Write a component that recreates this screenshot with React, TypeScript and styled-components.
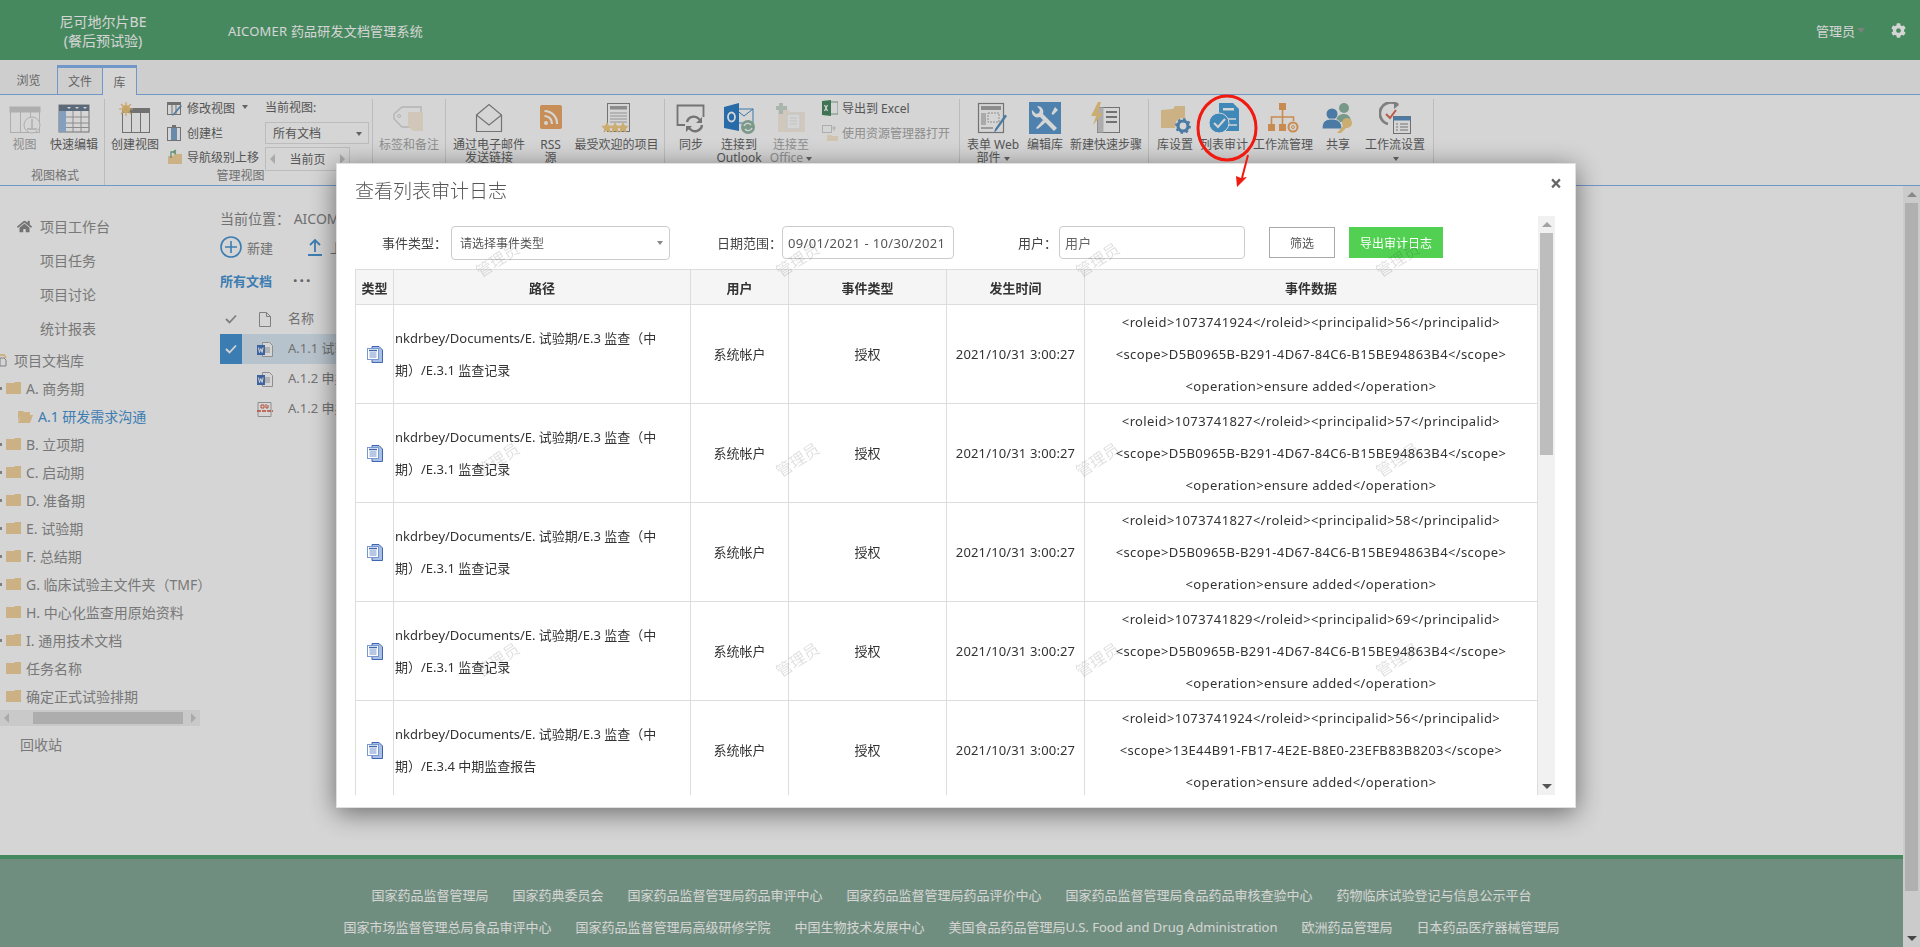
import React from "react";
import styled, { createGlobalStyle } from "styled-components";
import { FaCog, FaHome } from "react-icons/fa";

const FONT = `"Noto Sans", "Noto Sans CJK SC", sans-serif`;

const GlobalStyle = createGlobalStyle`
  html, body { margin: 0; padding: 0; height: 100%; overflow: hidden; background: #fff; }
  body { font-family: ${FONT}; font-size: 13px; color: #666; }
  * { box-sizing: border-box; }
`;

const Shell = styled.div`
  width: 1920px;
  height: 947px;
  display: flex;
  flex-direction: column;
  overflow: hidden;
`;

/* top bar */
const TopBar = styled.header`
  height: 60px;
  flex: none;
  display: flex;
  align-items: center;
  background: #55a572;
  color: #fff;
  font-size: 14px;
`;
const ProjectName = styled.div`
  width: 206px;
  text-align: center;
  line-height: 19px;
  padding-top: 2px;
`;
const SystemName = styled.div`
  margin-left: 22px;
  flex: 1;
  font-size: 13px;
  letter-spacing: 0.2px;
`;
const UserName = styled.div`
  display: flex;
  align-items: center;
  gap: 2px;
  margin-right: 26px;
  font-size: 13px;
  &::after {
    content: "";
    border: 4px solid transparent;
    border-top: 5px solid #8f9f94;
    margin-top: 5px;
  }
`;
const Gear = styled(FaCog)`
  width: 15px;
  height: 15px;
  margin-right: 14px;
  color: #fff;
`;

/* ribbon tabs */
const TabStrip = styled.div`
  height: 35px;
  flex: none;
  display: flex;
  align-items: flex-end;
  background: #f7f7f7;
  border-bottom: 1px solid #88b5f0;
  font-size: 12px;
`;
const Tab = styled.div<{ $w: number; $on?: boolean; $plain?: boolean }>`
  width: ${(p) => p.$w}px;
  height: ${(p) => (p.$on ? 30 : 29)}px;
  display: flex;
  align-items: center;
  justify-content: center;
  color: #777;
  margin-bottom: ${(p) => (p.$on ? -1 : 0)}px;
  background: ${(p) => (p.$on ? "#fff" : "transparent")};
  border: ${(p) => (p.$plain ? "none" : "1px solid #88b5f0")};
  border-top: ${(p) => (p.$plain ? "none" : "3px solid #88b5f0")};
  border-bottom: none;
  border-left-width: ${(p) => (p.$on ? 0 : 1)}px;
`;

const Ribbon = styled.div`
  height: 91px;
  flex: none;
  display: flex;
  background: #fff;
  border-bottom: 1px solid #88b5f0;
`;
const Group = styled.section<{ $w: number; $pl?: number }>`
  width: ${(p) => p.$w}px;
  flex: none;
  margin-top: 4px;
  padding-left: ${(p) => p.$pl ?? 0}px;
  border-right: 1px solid #e2e2e2;
  display: flex;
  flex-direction: column;
`;
const GroupItems = styled.div`
  flex: 1;
  display: flex;
  align-items: flex-start;
  min-height: 0;
`;
const GroupLabel = styled.div`
  height: 18px;
  line-height: 18px;
  font-size: 12px;
  text-align: center;
  color: #888;
`;
const BigItem = styled.div<{ $w: number; $off?: boolean }>`
  width: ${(p) => p.$w}px;
  flex: none;
  padding-top: 3px;
  display: flex;
  flex-direction: column;
  align-items: center;
  font-size: 12px;
  text-align: center;
  white-space: nowrap;
  color: ${(p) => (p.$off ? "#aaa" : "#666")};
  svg { display: block; margin-bottom: 4px; }
`;
const ItemText = styled.div`
  line-height: 13px;
`;
const Caret = styled.span`
  display: inline-block;
  margin-left: 3px;
  border: 3px solid transparent;
  border-top: 4px solid #777;
  vertical-align: -2px;
`;
const SmallColumn = styled.div<{ $w: number; $ml: number }>`
  width: ${(p) => p.$w}px;
  margin-left: ${(p) => p.$ml}px;
  margin-top: -3px;
  flex: none;
  display: flex;
  flex-direction: column;
  font-size: 12px;
`;
const SmallItem = styled.div<{ $off?: boolean }>`
  height: 24.5px;
  display: flex;
  align-items: center;
  gap: 4px;
  white-space: nowrap;
  color: ${(p) => (p.$off ? "#aaa" : "#666")};
`;
const CurrentViewColumn = styled.div`
  width: 104px;
  flex: none;
  font-size: 12px;
  color: #666;
`;
const ViewCaption = styled.div`
  height: 23px;
  line-height: 18px;
`;
const ViewSelect = styled.div`
  height: 22px;
  display: flex;
  align-items: center;
  justify-content: space-between;
  padding: 0 6px 0 7px;
  border: 1px solid #e1e1e1;
  &::after {
    content: "";
    border: 3px solid transparent;
    border-top: 4px solid #777;
    margin-top: 4px;
  }
`;
const PageBox = styled.div`
  width: 85px;
  height: 24px;
  margin-top: 3px;
  display: flex;
  align-items: center;
  justify-content: space-between;
  padding: 0 4px;
  border: 1px solid #e1e1e1;
`;
const Tri = styled.span<{ $dir: "left" | "right" }>`
  border: 5px solid transparent;
  ${(p) => (p.$dir === "left" ? "border-right: 5px solid #ccc; border-left: 0;" : "border-left: 5px solid #ccc; border-right: 0;")}
`;

/* body */
const BodyRow = styled.div`
  flex: 1;
  min-height: 0;
  display: flex;
`;
const ContentColumn = styled.div`
  flex: 1;
  min-width: 0;
  display: flex;
  flex-direction: column;
`;
const Main = styled.main`
  flex: 1;
  min-height: 0;
  display: flex;
  overflow: hidden;
  background: #fff;
`;
const PageScrollbar = styled.div`
  width: 17px;
  flex: none;
  display: flex;
  flex-direction: column;
  align-items: center;
  background: #f4f4f4;
  padding: 0 2px;
`;
const ScrollArrow = styled.div<{ $up?: boolean; $dark?: boolean }>`
  height: 17px;
  flex: none;
  display: flex;
  align-items: center;
  justify-content: center;
  &::after {
    content: "";
    border: 5px solid transparent;
    ${(p) => (p.$up ? "border-top: 0;" : "border-bottom: 0;")}
    border-${(p) => (p.$up ? "bottom" : "top")}: 5px solid ${(p) => (p.$dark ? "#555" : "#a3a3a3")};
  }
`;
const PageThumb = styled.div`
  width: 13px;
  height: 688px;
  flex: none;
  background: #d3d3d3;
`;
const PageScrollFill = styled.div`
  flex: 1;
`;

const Nav = styled.nav`
  width: 200px;
  flex: none;
  padding-top: 23px;
  color: #909090;
  font-size: 14px;
`;
const NavLink = styled.div`
  height: 34px;
  display: flex;
  align-items: center;
  padding-left: 40px;
  position: relative;
`;
const HomeIcon = styled(FaHome)`
  position: absolute;
  left: 17px;
  top: 10px;
  width: 15px;
  height: 15px;
  color: #8a8a8a;
`;
const TreeRoot = styled.div`
  height: 28px;
  margin-top: 1px;
  display: flex;
  align-items: center;
  gap: 4px;
`;
const TreeRow = styled.div<{ $depth?: number; $on?: boolean; $dot?: boolean }>`
  height: 28px;
  display: flex;
  align-items: center;
  gap: 5px;
  white-space: nowrap;
  position: relative;
  padding-left: ${(p) => (p.$depth ? 18 : 6)}px;
  color: ${(p) => (p.$on ? "#4a96d5" : "#909090")};
  svg { flex: none; }
  &::before {
    content: "";
    display: ${(p) => (p.$dot ? "block" : "none")};
    position: absolute;
    left: 0;
    top: 13px;
    width: 2px;
    height: 3px;
    background: #999;
  }
`;
const NavScroll = styled.div`
  height: 16px;
  display: flex;
  align-items: center;
  justify-content: space-between;
  background: #f1f1f1;
  padding: 0 4px;
`;
const NavThumb = styled.div`
  width: 150px;
  height: 12px;
  margin-left: 16px;
  background: #d0d0d0;
`;
const Recycle = styled.div`
  margin-top: 9px;
  padding-left: 20px;
  line-height: 20px;
`;

const ListPane = styled.div`
  width: 1000px;
  flex: none;
  padding: 22px 0 0 20px;
  color: #888;
  white-space: nowrap;
  font-size: 14px;
`;
const Crumb = styled.div`
  height: 22px;
  line-height: 22px;
`;
const ActionRow = styled.div`
  height: 38px;
  display: flex;
  align-items: center;
  font-size: 13px;
  padding-bottom: 4px;
`;
const NewAction = styled.span`
  display: flex;
  align-items: center;
  gap: 5px;
  width: 56px;
  svg { flex: none; }
`;
const UploadAction = styled.span`
  display: flex;
  align-items: center;
  gap: 8px;
  margin-left: 32px;
`;
const ViewTabs = styled.div`
  height: 26px;
  margin-top: -1px;
  display: flex;
  align-items: center;
  gap: 21px;
  font-size: 13px;
`;
const ViewTab = styled.span`
  font-weight: 700;
  color: #4a96d5;
`;
const Dots = styled.span`
  font-weight: 700;
  font-size: 16px;
  letter-spacing: 2px;
  color: #777;
  line-height: 10px;
`;
const ListHead = styled.div`
  height: 30px;
  margin-top: 11px;
  display: flex;
  align-items: center;
  font-size: 13px;
`;
const ListRow = styled.div<{ $on?: boolean }>`
  height: 30px;
  display: flex;
  align-items: center;
  font-size: 13px;
  background: ${(p) => (p.$on ? "#dceaf5" : "transparent")};
`;
const CheckCell = styled.div<{ $on?: boolean }>`
  width: 22px;
  height: 100%;
  flex: none;
  display: flex;
  align-items: center;
  justify-content: center;
  background: ${(p) => (p.$on ? "#4796d7" : "transparent")};
`;
const FileCell = styled.div`
  width: 46px;
  flex: none;
  display: flex;
  justify-content: center;
`;
const NameCell = styled.div`
  padding-bottom: 4px;
`;

/* footer */
const Footer = styled.footer`
  height: 92px;
  flex: none;
  padding-top: 19px;
  background: #87ab98;
  border-top: 4px solid #55a572;
  color: #fff;
  font-size: 13px;
`;
const FooterRow = styled.div`
  height: 32px;
  display: flex;
  justify-content: center;
  align-items: center;
  gap: 24px;
  white-space: nowrap;
`;

/* modal */
const Backdrop = styled.div`
  position: fixed;
  inset: 0;
  background: rgba(0, 0, 0, 0.165);
`;
const Modal = styled.div`
  position: fixed;
  left: 336px;
  top: 163px;
  width: 1240px;
  height: 645px;
  background: #fff;
  box-shadow: 0 5px 25px rgba(0, 0, 0, 0.5);
  border: 1px solid rgba(0, 0, 0, 0.12);
  display: flex;
  flex-direction: column;
  padding: 0 20px 12px 18px;
  overflow: hidden;
  color: #333;
`;
const ModalHead = styled.div`
  height: 52px;
  flex: none;
  display: flex;
  align-items: center;
  justify-content: space-between;
`;
const ModalTitle = styled.h4`
  margin: 0;
  font-size: 19px;
  font-weight: 300;
  color: #555;
`;
const Close = styled.span`
  font-size: 21px;
  font-weight: 700;
  color: #666;
  margin-right: -7px;
  margin-top: -13px;
  line-height: 1;
`;
const ModalBody = styled.div`
  flex: 1;
  min-height: 0;
  display: flex;
`;
const ModalContent = styled.div`
  width: 1183px;
  flex: none;
  overflow: hidden;
`;
const FilterRow = styled.div`
  height: 53px;
  display: flex;
  align-items: center;
  padding-left: 27px;
`;
const FilterLabel = styled.label<{ $w: number; $ml?: number }>`
  width: ${(p) => p.$w}px;
  margin-left: ${(p) => p.$ml ?? 0}px;
  font-size: 13px;
  flex: none;
  color: #444;
`;
const SelectBox = styled.div`
  width: 219px;
  height: 34px;
  flex: none;
  display: flex;
  align-items: center;
  justify-content: space-between;
  padding: 0 6px 0 8px;
  border: 1px solid #ccc;
  border-radius: 4px;
  font-size: 12px;
  color: #555;
  &::after {
    content: "";
    border: 3px solid transparent;
    border-top: 4px solid #888;
    margin-top: 4px;
  }
`;
const TextBox = styled.input<{ $w: number }>`
  width: ${(p) => p.$w}px;
  height: 33px;
  flex: none;
  padding: 0 0 0 5px;
  border: 1px solid #ccc;
  border-radius: 4px;
  font-family: ${FONT};
  font-size: 13px;
  letter-spacing: 0.35px;
  color: #555;
  outline: none;
  &::placeholder { color: #666; }
`;
const FilterButton = styled.button`
  width: 66px;
  height: 31px;
  margin-left: 24px;
  flex: none;
  background: #fff;
  border: 1px solid #aaa;
  font-family: ${FONT};
  font-size: 12px;
  color: #555;
`;
const ExportButton = styled.button`
  width: 94px;
  height: 31px;
  margin-left: 14px;
  flex: none;
  background: #52d052;
  border: none;
  font-family: ${FONT};
  font-size: 12px;
  color: #fff;
`;
const Table = styled.table`
  width: 1182px;
  table-layout: fixed;
  border-collapse: collapse;
  font-size: 13px;
  color: #333;
`;
const Th = styled.th<{ $w: number }>`
  width: ${(p) => p.$w}px;
  height: 35px;
  padding: 0;
  background: #f5f5f5;
  border: 1px solid #ddd;
  font-weight: 700;
  font-size: 13px;
  color: #333;
`;
const Td = styled.td<{ $left?: boolean }>`
  height: 99px;
  padding: 0 0 0 ${(p) => (p.$left ? 1 : 0)}px;
  border: 1px solid #ddd;
  text-align: ${(p) => (p.$left ? "left" : "center")};
  line-height: 32.3px;
  white-space: nowrap;
  svg { display: block; margin: 0 auto; }
`;
const CellLine = styled.div`
  height: 32.3px;
`;
const DataLine = styled(CellLine)`
  letter-spacing: 0.38px;
`;
const TimeText = styled.span`
  letter-spacing: 0.15px;
`;
const ModalScrollbar = styled.div`
  width: 17px;
  flex: none;
  display: flex;
  flex-direction: column;
  align-items: center;
  background: #f1f1f1;
`;
const ModalThumb = styled.div`
  width: 13px;
  height: 222px;
  flex: none;
  background: #bdbdbd;
`;
const Watermarks = styled.div`
  position: absolute;
  left: 10px;
  top: -5px;
  display: grid;
  grid-template-columns: repeat(4, 300px);
  grid-auto-rows: 200px;
  pointer-events: none;
`;
const Watermark = styled.span`
  display: flex;
  align-items: center;
  justify-content: center;
  transform: rotate(-33deg);
  font-size: 16px;
  color: rgba(0, 0, 0, 0.12);
`;
const Annotation = styled.svg`
  position: fixed;
  left: 1190px;
  top: 90px;
`;

/* icons drawn for the ribbon */
const Ico: React.FC<{ s?: number; children: React.ReactNode }> = ({ s = 32, children }) => (
  <svg width={s} height={s} viewBox={`0 0 ${s} ${s}`} fill="none">
    {children}
  </svg>
);

const TableGrid = ({ op = 1 }: { op?: number }) => (
  <g opacity={op} stroke="#8f8f8f">
    <rect x="1.5" y="5.5" width="29" height="25" fill="#fff" />
    <rect x="1" y="5" width="30" height="5" fill="#8f8f8f" />
    <path d="M11.5 10v20M21.5 10v20" />
  </g>
);
const ViewIco = () => (
  <Ico>
    <g opacity="0.4">
      <TableGrid />
      <circle cx="23" cy="23" r="8" fill="#fff" stroke="#8f8f8f" />
      <path d="M23 17v10M18 27h10" stroke="#8f8f8f" strokeWidth="1.5" />
    </g>
  </Ico>
);
const QuickEditIco = () => (
  <Ico>
    <rect x="1" y="3" width="30" height="27" fill="#fff" stroke="#8b8b8b" />
    <rect x="1" y="3" width="30" height="6" fill="#6d7f92" />
    <rect x="1" y="9" width="7" height="21" fill="#9dbfe4" />
    <path d="M8 15h23M8 21h23M8 25.500h23M15 9v21M23 9v21" stroke="#a8a8a8" />
    <path d="M9 5h4l-2 2zM17 5h4l-2 2zM25 5h4l-2 2z" fill="#fff" />
  </Ico>
);
const CreateViewIco = () => (
  <Ico>
    <rect x="3.500" y="6.500" width="27" height="24" fill="#fff" stroke="#888" />
    <rect x="3" y="6" width="28" height="5" fill="#888" />
    <path d="M12.500 11v19M21.500 11v19" stroke="#888" />
    <circle cx="7" cy="7" r="4" fill="#f3cf89" />
    <path d="M7 0v14M0 7h14M2 2l10 10M12 2L2 12" stroke="#eec477" strokeWidth="1.200" />
  </Ico>
);
const TagIco = () => (
  <Ico>
    <g opacity="0.45">
      <path d="M1 12l8-7h19v20H9l-8-8z" fill="#fff" stroke="#aaa" strokeWidth="1.300" />
      <circle cx="6" cy="14" r="1.500" stroke="#aaa" />
      <path d="M15 10h15v19H20l-5-5z" fill="#f3dcb6" />
    </g>
  </Ico>
);
const MailIco = () => (
  <Ico>
    <path d="M3.500 13L16 2.500 28.500 13v16.500h-25z" fill="#fff" stroke="#8a8a8a" strokeWidth="1.200" />
    <path d="M3.500 13L16 23l12.500-10" stroke="#8a8a8a" strokeWidth="1.200" />
  </Ico>
);
const RssIco = () => (
  <Ico>
    <rect x="5" y="3" width="22" height="24" rx="2" fill="#f0ab6a" />
    <circle cx="11" cy="21" r="2" fill="#fff" />
    <path d="M9.500 14a7.500 7.500 0 0 1 7.500 8M9.500 9a12.500 12.500 0 0 1 12.500 13" stroke="#fff" strokeWidth="2.200" />
  </Ico>
);
const StarPageIco = () => (
  <Ico>
    <rect x="6.500" y="1.500" width="22" height="28" fill="#fff" stroke="#8a8a8a" />
    <rect x="9" y="4" width="17" height="3.500" fill="#a8a8a8" />
    <path d="M9 11h17M9 14h17M9 17h17M9 20h17" stroke="#b0b0b0" />
    <g fill="#f3cf89">
      <path d="M6 20l1.800 3.600 3.900.5-2.800 2.700.7 3.900L6 28.800l-3.600 1.900.7-3.900L.3 24.100l3.900-.5z" />
      <path d="M14 20l1.800 3.600 3.900.5-2.800 2.700.7 3.900-3.600-1.900-3.600 1.900.7-3.900-2.800-2.700 3.900-.5z" />
      <path d="M22 20l1.800 3.600 3.900.5-2.800 2.700.7 3.900-3.600-1.900-3.600 1.900.7-3.900-2.800-2.700 3.900-.5z" />
    </g>
  </Ico>
);
const SyncIco = () => (
  <Ico>
    <path d="M10 23H2.500V3.500h26V15" stroke="#8a8a8a" strokeWidth="1.800" />
    <path d="M12 20a7 7 0 0 1 12-3l2 2M27 23a7 7 0 0 1-12 4l-2-2" stroke="#8a8a8a" strokeWidth="2.400" />
    <path d="M27 15v6h-6zM11 30v-6h6z" fill="#8a8a8a" />
  </Ico>
);
const OutlookIco = () => (
  <Ico>
    <rect x="12" y="7" width="18" height="14" fill="#fff" stroke="#4a8fcc" />
    <path d="M12 7l9 7 9-7" stroke="#4a8fcc" />
    <path d="M1 5l15-4v28L1 26z" fill="#2f80c9" />
    <ellipse cx="8.500" cy="15" rx="3.500" ry="4.500" stroke="#fff" strokeWidth="1.800" />
    <circle cx="25" cy="25" r="7" fill="#94b8a5" />
    <path d="M21 24a4 4 0 0 1 7-1M29 26a4 4 0 0 1-7 1" stroke="#fff" strokeWidth="1.300" />
  </Ico>
);
const OfficeIco = () => (
  <Ico>
    <g opacity="0.4">
      <path d="M3 7h9l3 3h15v20H3z" fill="#f3dcb6" />
      <rect x="12" y="12" width="13" height="15" fill="#fff" stroke="#ccc" />
      <path d="M15 16h7M15 19h7M15 22h7" stroke="#ccc" />
      <path d="M4 0v11M-1 5h11" transform="translate(2 1)" stroke="#7fa58f" strokeWidth="4" />
    </g>
  </Ico>
);
const FormIco = () => (
  <Ico>
    <rect x="1.500" y="1.500" width="25" height="29" fill="#fff" stroke="#8a8a8a" strokeWidth="1.200" />
    <rect x="4" y="4" width="20" height="4" fill="#a8a8a8" />
    <rect x="4" y="11" width="5" height="12" fill="#ccc" />
    <rect x="11" y="11" width="11" height="9" stroke="#aaa" strokeDasharray="2 1" />
    <path d="M4 26h12" stroke="#bbb" strokeWidth="2" />
    <path d="M30 14L20 28l-3 3 1-4 10-14.500z" fill="#5a93c5" />
  </Ico>
);
const LibEditIco = () => (
  <Ico>
    <rect width="32" height="32" fill="#5f9bd1" />
    <path d="M8 4a6 6 0 0 1 6 8l14 14-3 3-14-14a6 6 0 0 1-8-7l4 4 3-1 1-3z" fill="#fff" />
    <path d="M26 5l3 3-5 5-1.500-1.500zM14 18l-7 8 1 1 2-1 7-6z" fill="#fff" />
  </Ico>
);
const QuickStepIco = () => (
  <Ico>
    <rect x="7.500" y="5.500" width="22" height="25" fill="#fff" stroke="#8a8a8a" />
    <rect x="7.500" y="5.500" width="6" height="25" fill="#d0d0d0" />
    <path d="M16 10h11M16 15h11M16 20h11" stroke="#888" strokeWidth="2" />
    <path d="M8 0l-7 14h5L3 23l10-12H8l3-11z" fill="#f3cf89" />
  </Ico>
);
const LibSetIco = () => (
  <Ico>
    <path d="M2 8l12-1 2-3 10 0v22H2z" fill="#f5d49e" />
    <circle cx="24" cy="24" r="8" fill="#fff" />
    <circle cx="24" cy="24" r="5" stroke="#5a93c5" strokeWidth="3.200" />
    <circle cx="24" cy="24" r="7" stroke="#5a93c5" strokeWidth="1.800" strokeDasharray="2.500 3" />
  </Ico>
);
const AuditIco = () => (
  <Ico>
    <path d="M11 1h14l6 6v22H18V22H11z" fill="#4ca3dc" />
    <rect x="15" y="6" width="11" height="2.500" fill="#fff" />
    <path d="M20 17h8M20 23h9" stroke="#fff" strokeWidth="1.600" />
    <circle cx="11" cy="21" r="10" fill="#4ca3dc" stroke="#fff" />
    <path d="M6 21l4 4 7-8" stroke="#fff" strokeWidth="2" />
  </Ico>
);
const FlowIco = () => (
  <Ico>
    <rect x="12" y="1" width="7" height="7" fill="#f0a860" />
    <rect x="1" y="22" width="7" height="7" fill="#f0a860" />
    <rect x="12" y="22" width="7" height="7" fill="#f0a860" />
    <path d="M15.500 8v14M4.500 22v-7h22v4" stroke="#f0a860" strokeWidth="1.600" />
    <circle cx="26" cy="25" r="4.500" stroke="#f0a860" strokeWidth="2" />
    <circle cx="26" cy="25" r="1.500" stroke="#f0a860" />
  </Ico>
);
const ShareIco = () => (
  <Ico>
    <circle cx="22" cy="6" r="5" fill="#90b8a5" />
    <path d="M14 20c0-6 4-8 8-8s7 3 7 8z" fill="#90b8a5" />
    <circle cx="10" cy="12" r="5.500" fill="#5a93c5" />
    <path d="M0 27c0-8 4-10 10-10s10 3 10 10z" fill="#5a93c5" stroke="#fff" />
    <circle cx="25" cy="21" r="5" fill="#f3cf89" />
    <path d="M22 23l-7 8h4l6-6z" fill="#f3cf89" />
  </Ico>
);
const FlowSetIco = () => (
  <Ico>
    <path d="M19 3A11 11 0 1 0 9 22" stroke="#999" strokeWidth="2.800" />
    <path d="M15 0l5 3-5 4z" fill="#999" />
    <path d="M7 12l4 4 6-8" stroke="#e06b55" strokeWidth="2" />
    <rect x="14.500" y="14.500" width="17" height="17" fill="#fff" stroke="#888" />
    <rect x="14.500" y="14.500" width="17" height="4" fill="#5a93c5" />
    <path d="M17 22h2M21 22h8M17 25h2M21 25h8M17 28h2M21 28h8" stroke="#888" />
  </Ico>
);

const SmallModify = () => (
  <Ico s={16}>
    <rect x="0.500" y="2.500" width="13" height="12" fill="#fff" stroke="#888" />
    <rect y="2" width="14" height="3" fill="#888" />
    <path d="M5 5v9M9 5v9" stroke="#888" />
    <path d="M15 6L7 15l-2 1 1-2 7.500-9z" fill="#5a93c5" />
  </Ico>
);
const SmallColumnIco = () => (
  <Ico s={16}>
    <rect x="0.500" y="2.500" width="13" height="13" fill="#fff" stroke="#888" />
    <rect x="4" y="3" width="6" height="12" fill="#7ea6cc" />
    <rect x="5" y="0" width="4" height="3" fill="#888" />
  </Ico>
);
const SmallUp = () => (
  <Ico s={16}>
    <path d="M1 7h5l1-2h8v10H1z" fill="#f5d49e" />
    <path d="M4 9V3h5M9 1l-3 2 3 2" stroke="#7fae8f" strokeWidth="1.400" />
  </Ico>
);
const SmallExcel = () => (
  <Ico s={16}>
    <rect x="7" y="2" width="9" height="12" fill="#fff" stroke="#7fae8f" />
    <path d="M0 1l9-1v16l-9-1z" fill="#4b8a64" />
    <path d="M2.500 5l3 6M5.500 5l-3 6" stroke="#fff" strokeWidth="1.200" />
  </Ico>
);
const SmallExplorer = () => (
  <Ico s={16}>
    <g opacity="0.45">
      <rect x="0.500" y="0.500" width="9" height="7" stroke="#999" />
      <path d="M12 1v5M10 3h4" stroke="#999" />
      <path d="M5 10h4l1 1h6v5H5z" fill="#f5d49e" />
    </g>
  </Ico>
);
const Folder = ({ open }: { open?: boolean }) => (
  <svg width="15" height="14" viewBox="0 0 15 14">
    {open ? (
      <path d="M0 2h5l1 1h6v3H3L0 12zM3 6h12l-3 8H0z" fill="#f5d49e" />
    ) : (
      <path d="M0 2h8l1-1h6v12H0z" fill="#f5d49e" />
    )}
  </svg>
);
const LibIcon = () => (
  <svg width="10" height="14" viewBox="0 0 10 14" fill="none">
    <path d="M0 5h4l2 2v6H0z" stroke="#999" />
    <path d="M-4 2h8l2 3" stroke="#f5d49e" strokeWidth="2" />
  </svg>
);
const WordFile = () => (
  <svg width="16" height="15" viewBox="0 0 16 15">
    <path d="M5.500.5h7l3 3v11h-10z" fill="#fff" stroke="#aaa" />
    <path d="M8 6h5M8 8h5M8 10h5" stroke="#aaa" />
    <rect y="3" width="8" height="10" fill="#4a78bf" />
    <path d="M1.500 5.500l1 5 1.300-4 1.300 4 1-5" stroke="#fff" fill="none" />
  </svg>
);
const PdfFile = () => (
  <svg width="16" height="15" viewBox="0 0 16 15" fill="none">
    <path d="M1 .5h13v14H1z" stroke="#aaa" />
    <path d="M0 9h16" stroke="#d85a45" strokeWidth="1.500" strokeDasharray="4 1" />
    <path d="M4 3h3v3H4zM9 2v4h2V3" stroke="#d85a45" />
  </svg>
);
const DocIcon = () => (
  <svg width="16" height="17" viewBox="0 0 16 17" fill="none">
    <path d="M5 .5h7l3.500 3.500v12.500H5z" fill="#a9bfe8" stroke="#3f66b0" />
    <rect x="0.500" y="2.500" width="11" height="11" fill="#fff" stroke="#7898d0" />
    <path d="M2 4.500h8" stroke="#3f66b0" strokeWidth="1.500" />
    <path d="M2.500 7h7M2.500 9h7M2.500 11h7" stroke="#6f8fcc" />
  </svg>
);
const Tick = ({ color }: { color: string }) => (
  <svg width="12" height="10" viewBox="0 0 12 10" fill="none">
    <path d="M1 5l3.500 3.500L11 1.500" stroke={color} strokeWidth="1.800" />
  </svg>
);
const PlusCircle = () => (
  <svg width="22" height="22" viewBox="0 0 22 22" fill="none" stroke="#4a96d5" strokeWidth="1.600">
    <circle cx="11" cy="11" r="10" />
    <path d="M11 5v12M5 11h12" />
  </svg>
);
const UploadArrow = () => (
  <svg width="14" height="18" viewBox="0 0 14 18" fill="none" stroke="#4a96d5" strokeWidth="1.800">
    <path d="M7 14V2M2 7l5-5 5 5M0 17h14" />
  </svg>
);
const BlankPage = () => (
  <svg width="12" height="15" viewBox="0 0 12 15" fill="none" stroke="#999">
    <path d="M.5.500h7l4 4v10H.5zM7.500.500v4h4" />
  </svg>
);

const treeItems = [
  { label: "B. 立项期", dot: true },
  { label: "C. 启动期", dot: true },
  { label: "D. 准备期", dot: true },
  { label: "E. 试验期", dot: true },
  { label: "F. 总结期", dot: true },
  { label: "G. 临床试验主文件夹（TMF）", dot: true },
  { label: "H. 中心化监查用原始资料", dot: false },
  { label: "I. 通用技术文档", dot: true },
  { label: "任务名称", dot: false },
  { label: "确定正式试验排期", dot: false },
];

const footerRows = [
  [
    "国家药品监督管理局",
    "国家药典委员会",
    "国家药品监督管理局药品审评中心",
    "国家药品监督管理局药品评价中心",
    "国家药品监督管理局食品药品审核查验中心",
    "药物临床试验登记与信息公示平台",
  ],
  [
    "国家市场监督管理总局食品审评中心",
    "国家药品监督管理局高级研修学院",
    "中国生物技术发展中心",
    "美国食品药品管理局U.S. Food and Drug Administration",
    "欧洲药品管理局",
    "日本药品医疗器械管理局",
  ],
];

const pathA = "nkdrbey/Documents/E. 试验期/E.3 监查（中";
const auditRows = [
  { tail: "期）/E.3.1 监查记录", role: "1073741924", pid: "56", scope: "D5B0965B-B291-4D67-84C6-B15BE94863B4" },
  { tail: "期）/E.3.1 监查记录", role: "1073741827", pid: "57", scope: "D5B0965B-B291-4D67-84C6-B15BE94863B4" },
  { tail: "期）/E.3.1 监查记录", role: "1073741827", pid: "58", scope: "D5B0965B-B291-4D67-84C6-B15BE94863B4" },
  { tail: "期）/E.3.1 监查记录", role: "1073741829", pid: "69", scope: "D5B0965B-B291-4D67-84C6-B15BE94863B4" },
  { tail: "期）/E.3.4 中期监查报告", role: "1073741924", pid: "56", scope: "13E44B91-FB17-4E2E-B8E0-23EFB83B8203" },
];

const columns: [string, number][] = [
  ["类型", 38],
  ["路径", 297],
  ["用户", 98],
  ["事件类型", 158],
  ["发生时间", 138],
  ["事件数据", 453],
];

const App = () => (
  <>
    <GlobalStyle />
    <Shell>
      <TopBar>
        <ProjectName>
          尼可地尔片BE
          <br />
          (餐后预试验)
        </ProjectName>
        <SystemName>AICOMER 药品研发文档管理系统</SystemName>
        <UserName>管理员</UserName>
        <Gear />
      </TopBar>

      <TabStrip>
        <Tab $w={57} $plain>浏览</Tab>
        <Tab $w={46}>文件</Tab>
        <Tab $w={34} $on>库</Tab>
      </TabStrip>

      <Ribbon>
        <Group $w={105} $pl={6}>
          <GroupItems>
            <BigItem $w={37} $off><ViewIco /><ItemText>视图</ItemText></BigItem>
            <BigItem $w={62}><QuickEditIco /><ItemText>快速编辑</ItemText></BigItem>
          </GroupItems>
          <GroupLabel>视图格式</GroupLabel>
        </Group>
        <Group $w={268} $pl={4}>
          <GroupItems>
            <BigItem $w={52}><CreateViewIco /><ItemText>创建视图</ItemText></BigItem>
            <SmallColumn $w={98} $ml={6}>
              <SmallItem><SmallModify />修改视图 <Caret /></SmallItem>
              <SmallItem><SmallColumnIco />创建栏</SmallItem>
              <SmallItem><SmallUp />导航级别上移</SmallItem>
            </SmallColumn>
            <CurrentViewColumn>
              <ViewCaption>当前视图:</ViewCaption>
              <ViewSelect>所有文档</ViewSelect>
              <PageBox><Tri $dir="left" />当前页<Tri $dir="right" /></PageBox>
            </CurrentViewColumn>
          </GroupItems>
          <GroupLabel>管理视图</GroupLabel>
        </Group>
        <Group $w={73}>
          <GroupItems>
            <BigItem $w={72} $off><TagIco /><ItemText>标签和备注</ItemText></BigItem>
          </GroupItems>
        </Group>
        <Group $w={219} $pl={3}>
          <GroupItems>
            <BigItem $w={80}><MailIco /><ItemText>通过电子邮件<br />发送链接</ItemText></BigItem>
            <BigItem $w={43}><RssIco /><ItemText>RSS<br />源</ItemText></BigItem>
            <BigItem $w={89}><StarPageIco /><ItemText>最受欢迎的项目</ItemText></BigItem>
          </GroupItems>
        </Group>
        <Group $w={295} $pl={4}>
          <GroupItems>
            <BigItem $w={44}><SyncIco /><ItemText>同步</ItemText></BigItem>
            <BigItem $w={52}><OutlookIco /><ItemText>连接到<br />Outlook</ItemText></BigItem>
            <BigItem $w={52} $off><OfficeIco /><ItemText>连接至<br />Office<Caret /></ItemText></BigItem>
            <SmallColumn $w={136} $ml={5}>
              <SmallItem><SmallExcel />导出到 Excel</SmallItem>
              <SmallItem $off><SmallExplorer />使用资源管理器打开</SmallItem>
            </SmallColumn>
          </GroupItems>
        </Group>
        <Group $w={189} $pl={3}>
          <GroupItems>
            <BigItem $w={60}><FormIco /><ItemText>表单 Web<br />部件<Caret /></ItemText></BigItem>
            <BigItem $w={44}><LibEditIco /><ItemText>编辑库</ItemText></BigItem>
            <BigItem $w={78}><QuickStepIco /><ItemText>新建快速步骤</ItemText></BigItem>
          </GroupItems>
        </Group>
        <Group $w={285} $pl={3}>
          <GroupItems>
            <BigItem $w={46}><LibSetIco /><ItemText>库设置</ItemText></BigItem>
            <BigItem $w={52}><AuditIco /><ItemText>列表审计</ItemText></BigItem>
            <BigItem $w={66}><FlowIco /><ItemText>工作流管理</ItemText></BigItem>
            <BigItem $w={44}><ShareIco /><ItemText>共享</ItemText></BigItem>
            <BigItem $w={70}><FlowSetIco /><ItemText>工作流设置<br /><Caret /></ItemText></BigItem>
          </GroupItems>
        </Group>
      </Ribbon>

      <BodyRow>
        <ContentColumn>
          <Main>
            <Nav>
              <NavLink><HomeIcon />项目工作台</NavLink>
              <NavLink>项目任务</NavLink>
              <NavLink>项目讨论</NavLink>
              <NavLink>统计报表</NavLink>
              <TreeRoot><LibIcon />项目文档库</TreeRoot>
              <TreeRow $dot><Folder />A. 商务期</TreeRow>
              <TreeRow $depth={1} $on><Folder open />A.1 研发需求沟通</TreeRow>
              {treeItems.map((t) => (
                <TreeRow key={t.label} $dot={t.dot}><Folder />{t.label}</TreeRow>
              ))}
              <NavScroll>
                <Tri $dir="left" />
                <NavThumb />
                <Tri $dir="right" />
              </NavScroll>
              <Recycle>回收站</Recycle>
            </Nav>
            <ListPane>
              <Crumb>当前位置： AICOMER 药品研发文档</Crumb>
              <ActionRow>
                <NewAction><PlusCircle />新建</NewAction>
                <UploadAction><UploadArrow />上传</UploadAction>
              </ActionRow>
              <ViewTabs>
                <ViewTab>所有文档</ViewTab>
                <Dots>···</Dots>
              </ViewTabs>
              <ListHead>
                <CheckCell><Tick color="#999" /></CheckCell>
                <FileCell><BlankPage /></FileCell>
                <NameCell>名称</NameCell>
              </ListHead>
              <ListRow $on>
                <CheckCell $on><Tick color="#fff" /></CheckCell>
                <FileCell><WordFile /></FileCell>
                <NameCell>A.1.1 试验方案</NameCell>
              </ListRow>
              <ListRow>
                <CheckCell />
                <FileCell><WordFile /></FileCell>
                <NameCell>A.1.2 申办方</NameCell>
              </ListRow>
              <ListRow>
                <CheckCell />
                <FileCell><PdfFile /></FileCell>
                <NameCell>A.1.2 申办方</NameCell>
              </ListRow>
            </ListPane>
          </Main>
          <Footer>
            {footerRows.map((row, i) => (
              <FooterRow key={i}>
                {row.map((t) => (
                  <span key={t}>{t}</span>
                ))}
              </FooterRow>
            ))}
          </Footer>
        </ContentColumn>
        <PageScrollbar>
          <ScrollArrow $up />
          <PageThumb />
          <PageScrollFill />
          <ScrollArrow $dark />
        </PageScrollbar>
      </BodyRow>
    </Shell>

    <Backdrop />
    <Modal>
      <ModalHead>
        <ModalTitle>查看列表审计日志</ModalTitle>
        <Close>×</Close>
      </ModalHead>
      <ModalBody>
        <ModalContent>
          <FilterRow>
            <FilterLabel $w={69}>事件类型：</FilterLabel>
            <SelectBox>请选择事件类型</SelectBox>
            <FilterLabel $w={65} $ml={47}>日期范围：</FilterLabel>
            <TextBox $w={172} defaultValue="09/01/2021 - 10/30/2021" />
            <FilterLabel $w={41} $ml={64}>用户：</FilterLabel>
            <TextBox $w={186} placeholder="用户" />
            <FilterButton>筛选</FilterButton>
            <ExportButton>导出审计日志</ExportButton>
          </FilterRow>
          <Table>
            <thead>
              <tr>
                {columns.map(([label, w]) => (
                  <Th key={label} $w={w}>{label}</Th>
                ))}
              </tr>
            </thead>
            <tbody>
              {auditRows.map((r, i) => (
                <tr key={i}>
                  <Td><DocIcon /></Td>
                  <Td $left>
                    <CellLine>{pathA}</CellLine>
                    <CellLine>{r.tail}</CellLine>
                  </Td>
                  <Td>系统帐户</Td>
                  <Td>授权</Td>
                  <Td><TimeText>2021/10/31 3:00:27</TimeText></Td>
                  <Td>
                    <DataLine>{`<roleid>${r.role}</roleid><principalid>${r.pid}</principalid>`}</DataLine>
                    <DataLine>{`<scope>${r.scope}</scope>`}</DataLine>
                    <DataLine>{"<operation>ensure added</operation>"}</DataLine>
                  </Td>
                </tr>
              ))}
            </tbody>
          </Table>
        </ModalContent>
        <ModalScrollbar>
          <ScrollArrow $up />
          <ModalThumb />
          <PageScrollFill />
          <ScrollArrow $dark />
        </ModalScrollbar>
      </ModalBody>
      <Watermarks>
        {Array.from({ length: 12 }, (_, i) => (
          <Watermark key={i}>管理员</Watermark>
        ))}
      </Watermarks>
    </Modal>

    <Annotation width="80" height="100" viewBox="0 0 80 100" fill="none">
      <ellipse cx="37" cy="38" rx="29" ry="32" stroke="#f01a10" strokeWidth="3" />
      <path d="M58 65l-6 23" stroke="#f01a10" strokeWidth="2" />
      <path d="M47 97l-1-11 5 2 6-1z" fill="#f01a10" />
    </Annotation>
  </>
);

export default App;
